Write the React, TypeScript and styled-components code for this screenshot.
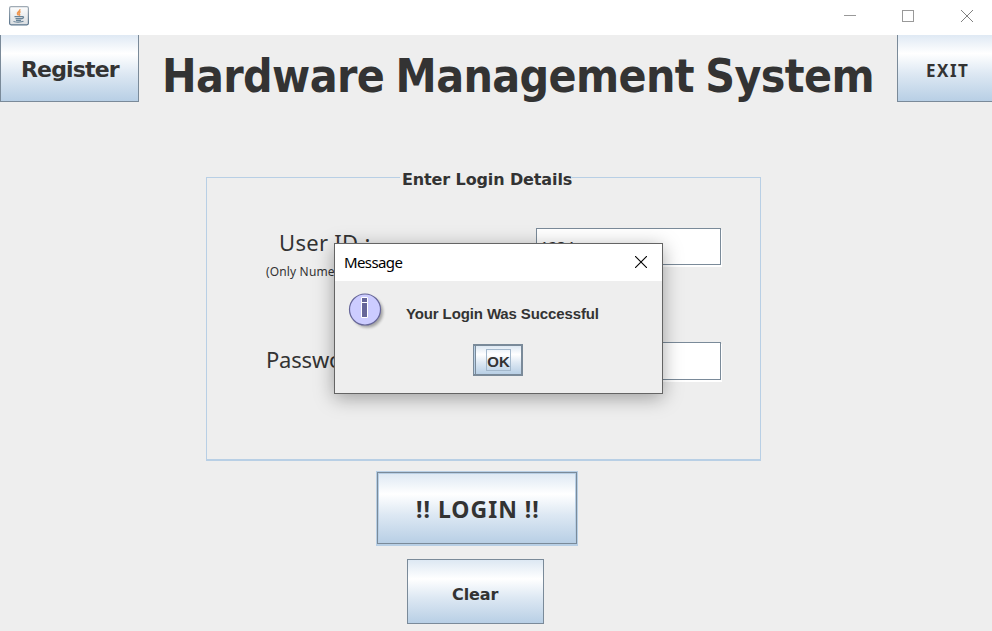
import React from "react";
import styled, { createGlobalStyle } from "styled-components";

const GlobalStyle = createGlobalStyle`
  * { box-sizing: border-box; }
  body { margin: 0; overflow: hidden; background: #eeeeee; }
  button { cursor: default; }
`;

const metal = "linear-gradient(#dde8f3 0%, #ffffff 30%, #dde8f3 60%, #b8cfe5 100%)";
const metalCut = "linear-gradient(#dfe9f4 0%, #ffffff 28%, #dde8f3 59%, #b8cfe5 100%)";

const Frame = styled.div`
  position: relative;
  width: 992px;
  height: 631px;
  overflow: hidden;
  background: #eeeeee;
  color: #333333;
  font-family: "Noto Sans", sans-serif;
  display: flex;
  flex-direction: column;
`;

const TitleBar = styled.div`
  height: 35px;
  flex: none;
  background: #ffffff;
  display: flex;
  align-items: flex-start;
  justify-content: space-between;
  padding: 6px 0 0 9px;
`;

const WindowControls = styled.div`
  display: flex;
  gap: 46px;
  padding: 4px 18px 0 0;
  svg { display: block; }
`;

const Header = styled.div`
  height: 67px;
  flex: none;
  display: grid;
  grid-template-columns: 139px 1fr 95px;
`;

const Label = styled.span<{ $size: number; $spacing?: number; $bold?: boolean; $dx?: number; $dy?: number; $font?: string }>`
  display: block;
  white-space: nowrap;
  font-family: ${(p) => p.$font ?? `"Noto Sans"`}, sans-serif;
  font-size: ${(p) => p.$size}px;
  line-height: 1;
  font-weight: ${(p) => (p.$bold ? 700 : 400)};
  letter-spacing: ${(p) => p.$spacing ?? 0}px;
  margin-left: ${(p) => p.$dx ?? 0}px;
  margin-top: ${(p) => p.$dy ?? 0}px;
`;

const MetalButton = styled.button<{ $w?: number; $h?: number; $cut?: "left" | "right" }>`
  width: ${(p) => (p.$w ? `${p.$w}px` : "auto")};
  height: ${(p) => p.$h ?? 67}px;
  padding: 0;
  color: #333333;
  display: flex;
  align-items: flex-start;
  justify-content: flex-start;
  border: 1px solid #7a8a99;
  border-top-width: ${(p) => (p.$cut ? 0 : 1)}px;
  border-right-width: ${(p) => (p.$cut === "right" ? 0 : 1)}px;
  background: ${(p) => (p.$cut ? metalCut : metal)};
`;

const DefaultButton = styled(MetalButton)`
  box-shadow: 0 0 0 1px #b8cfe5, 0 1px 0 1px #b8cfe5, inset 0 0 0 1px #b8cfe5;
`;

const Heading = styled.h1`
  margin: 0;
  padding: 18px 0 0 23px;
  word-spacing: -2.5px;
`;

const Details = styled.fieldset`
  width: 555px;
  height: 292px;
  margin: 67px 0 0 206px;
  padding: 0;
  min-width: 0;
  border: 0;
  flex: none;
  display: flex;
  flex-direction: column;
`;

const PanelTop = styled.div`
  height: 17px;
  display: grid;
  grid-template-columns: 194px 172px 1fr;
  flex: none;
  align-items: end;
`;

const PanelTitle = styled.div`
  height: 17px;
  padding-top: 3px;
`;

const TopRule = styled.div`
  height: 9px;
  border-top: 1px solid #b8cfe5;
  &:first-child { border-left: 1px solid #b8cfe5; }
  &:last-child { border-right: 1px solid #b8cfe5; }
`;

const PanelBody = styled.div`
  height: 275px;
  border: 1px solid #b8cfe5;
  border-top: 0;
  border-bottom-width: 2px;
  padding-top: 42px;
`;

const FieldRow = styled.div`
  height: 114px;
  display: grid;
  grid-template-columns: 329px 185px;
`;

const Caption = styled.div<{ $left: number }>`
  padding-left: ${(p) => p.$left}px;
`;

const TextField = styled.div<{ $h: number }>`
  height: ${(p) => p.$h}px;
  border: 1px solid #7a8a99;
  background: #ffffff;
  box-shadow: 1px 2px 0 #ffffff;
  padding: 10px 3px;
`;

const Actions = styled.div`
  display: flex;
  flex-direction: column;
  padding: 11px 0 0 377px;
  gap: 15px;
`;

const ClearSlot = styled.div`
  padding-left: 30px;
`;

const Dialog = styled.div`
  position: absolute;
  left: 334px;
  top: 243px;
  width: 329px;
  height: 151px;
  border: 1px solid #646464;
  background: #eeeeee;
  box-shadow: 0 4px 18px rgba(0, 0, 0, 0.34);
`;

const DialogTitle = styled.div`
  height: 37px;
  background: #ffffff;
  color: #000000;
  display: flex;
  justify-content: space-between;
  align-items: flex-start;
  padding: 12px 15px 0 9px;
`;

const DialogMessage = styled.div`
  height: 63px;
  display: grid;
  grid-template-columns: 71px 1fr;
`;

const InfoIcon = styled.svg`
  display: block;
  margin: 10px 0 0 12px;
`;

const OkButton = styled.button`
  display: flex;
  width: 50px;
  height: 32px;
  margin-left: 138px;
  border: 2px solid #7a8a99;
  border-left-width: 1px;
  box-shadow: inset 1px 0 #b8cfe5, inset 2px 0 #7a8a99;
  background: ${metal};
  padding: 3px 0 0 12px;
  color: #333333;
`;

const FocusRing = styled.span`
  display: block;
  width: 25px;
  height: 22px;
  border: 1px solid #a3b8cc;
`;

const JavaIcon = () => (
  <svg width="20" height="20" viewBox="0 0 20 20" fill="none">
    <defs>
      <linearGradient id="tile" x2="0" y2="1">
        <stop stopColor="#fefefe" />
        <stop offset="1" stopColor="#d9dde1" />
      </linearGradient>
      <linearGradient id="edge" x2="0" y2="1">
        <stop stopColor="#a0abb5" />
        <stop offset="1" stopColor="#58738b" />
      </linearGradient>
    </defs>
    <rect x=".6" y=".6" width="18.8" height="18.2" rx="1.5" fill="url(#tile)" stroke="url(#edge)" strokeWidth="1.2" />
    <path d="M10.800 3.200c.8 2-3.300 2.800-2.300 4.700.4.8 1 1.100 1 1.700M11.600 5.600c-1.600.8-2 1.600-1 2.700.4.500 0 1-.5 1.400" stroke="#ee9650" strokeWidth="1.500" />
    <path d="M5.500 10.600h8M6.500 12.600h6M7 14.300h5M13 10.700c2.400-.4 2 1.500-.6 2.200M4.500 15.400c1 .9 8 .9 10-.1" stroke="#688398" strokeWidth="1.200" />
  </svg>
);

export default function App() {
  return (
    <Frame>
      <GlobalStyle />
      <TitleBar>
        <JavaIcon />
        <WindowControls>
          <svg width="12" height="12"><path d="M0 5.500h12" stroke="#999" /></svg>
          <svg width="12" height="12"><rect x=".5" y=".5" width="11" height="11" fill="none" stroke="#999" /></svg>
          <svg width="14" height="12"><path d="M1 0l12 12M13 0L1 12" stroke="#808080" /></svg>
        </WindowControls>
      </TitleBar>
      <Header>
        <MetalButton $cut="left">
          <Label $size={22} $bold $font={`"DejaVu Sans"`} $spacing={-0.85} $dx={20} $dy={24}>Register</Label>
        </MetalButton>
        <Heading>
          <Label $size={46} $bold $font={`"DejaVu Sans Condensed"`} $spacing={-0.62}>Hardware Management System</Label>
        </Heading>
        <MetalButton $cut="right">
          <Label $size={17} $bold $spacing={1.5} $dx={28} $dy={27}>EXIT</Label>
        </MetalButton>
      </Header>
      <Details>
        <PanelTop>
          <TopRule />
          <PanelTitle>
            <Label $size={16} $bold $font={`"DejaVu Sans"`} $spacing={-0.12} $dx={2}>Enter Login Details</Label>
          </PanelTitle>
          <TopRule />
        </PanelTop>
        <PanelBody>
          <FieldRow>
            <Caption $left={72}>
              <Label $size={22} $spacing={0.3} $dy={3}>User ID :</Label>
              <Label $size={12} $spacing={0.15} $dx={-13} $dy={13}>(Only Numeric)</Label>
            </Caption>
            <TextField $h={37}><Label $size={15}>1234</Label></TextField>
          </FieldRow>
          <FieldRow>
            <Caption $left={58}>
              <Label $size={22} $spacing={-0.2} $dx={1} $dy={6}>Password :</Label>
            </Caption>
            <TextField $h={38} />
          </FieldRow>
        </PanelBody>
      </Details>
      <Actions>
        <DefaultButton $w={200} $h={72}>
          <Label $size={23} $bold $spacing={1} $dx={38} $dy={25}>!! LOGIN !!</Label>
        </DefaultButton>
        <ClearSlot>
          <MetalButton $w={137} $h={65}>
            <Label $size={16} $bold $font={`"DejaVu Sans"`} $spacing={-0.1} $dx={44} $dy={27}>Clear</Label>
          </MetalButton>
        </ClearSlot>
      </Actions>
      <Dialog>
        <DialogTitle>
          <Label $size={15} $spacing={-0.6} $dy={-1}>Message</Label>
          <svg width="12" height="12"><path d="M0 0l12 12M12 0L0 12" stroke="#000" strokeWidth="1.100" /></svg>
        </DialogTitle>
        <DialogMessage>
          <InfoIcon width="44" height="44" viewBox="0 0 44 44">
            <defs><filter id="blur"><feGaussianBlur stdDeviation="1.500" /></filter></defs>
            <circle cx="20.500" cy="21" r="15.500" fill="#000" opacity=".32" filter="url(#blur)" />
            <circle cx="18" cy="18.500" r="15.500" fill="#ccccff" stroke="#666699" strokeWidth="1.200" />
            <path d="M14.500 6.500h6v5h-6zM14.500 11.500h6v15h-6z" fill="#666699" stroke="#fff" />
          </InfoIcon>
          <Label $size={15} $bold $font={`"Liberation Sans"`} $spacing={-0.12} $dy={25}>Your Login Was Successful</Label>
        </DialogMessage>
        <OkButton>
          <FocusRing><Label $size={15} $bold $font={`"Liberation Sans"`} $dy={4}>OK</Label></FocusRing>
        </OkButton>
      </Dialog>
    </Frame>
  );
}
